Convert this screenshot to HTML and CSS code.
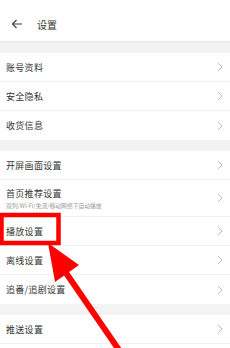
FILE: index.html
```html
<!DOCTYPE html>
<html lang="zh">
<head>
<meta charset="utf-8">
<link rel="stylesheet" href="styles.css">
</head>
<body>
<div class="screen">
  <header class="topbar">
    <svg class="back" width="12" height="10" viewBox="0 0 12 10"><path d="M11 5H1.5M5.5 1L1.5 5l4 4" fill="none" stroke="#444" stroke-width="1.2"/></svg>
    <span class="title">设置</span>
  </header>
  <div class="gap"></div>
  <section class="group">
    <div class="row"><span class="label">账号资料</span><svg class="chev" width="6" height="10" viewBox="0 0 6 10"><path d="M1 1l4 4-4 4" fill="none" stroke="#bbb" stroke-width="1"/></svg></div>
    <div class="row"><span class="label">安全隐私</span><svg class="chev" width="6" height="10" viewBox="0 0 6 10"><path d="M1 1l4 4-4 4" fill="none" stroke="#bbb" stroke-width="1"/></svg></div>
    <div class="row"><span class="label">收货信息</span><svg class="chev" width="6" height="10" viewBox="0 0 6 10"><path d="M1 1l4 4-4 4" fill="none" stroke="#bbb" stroke-width="1"/></svg></div>
  </section>
  <div class="gap"></div>
  <section class="group">
    <div class="row"><span class="label">开屏画面设置</span><svg class="chev" width="6" height="10" viewBox="0 0 6 10"><path d="M1 1l4 4-4 4" fill="none" stroke="#bbb" stroke-width="1"/></svg></div>
    <div class="row tall"><div class="texts"><span class="label">首页推荐设置</span><span class="sub">双列/Wi-Fi/免流/移动网络下自动播放</span></div><svg class="chev" width="6" height="10" viewBox="0 0 6 10"><path d="M1 1l4 4-4 4" fill="none" stroke="#bbb" stroke-width="1"/></svg></div>
    <div class="row"><span class="label">播放设置</span><svg class="chev" width="6" height="10" viewBox="0 0 6 10"><path d="M1 1l4 4-4 4" fill="none" stroke="#bbb" stroke-width="1"/></svg></div>
    <div class="row"><span class="label">离线设置</span><svg class="chev" width="6" height="10" viewBox="0 0 6 10"><path d="M1 1l4 4-4 4" fill="none" stroke="#bbb" stroke-width="1"/></svg></div>
    <div class="row"><span class="label">追番/追剧设置</span><svg class="chev" width="6" height="10" viewBox="0 0 6 10"><path d="M1 1l4 4-4 4" fill="none" stroke="#bbb" stroke-width="1"/></svg></div>
  </section>
  <div class="gap"></div>
  <section class="group">
    <div class="row"><span class="label">推送设置</span><svg class="chev" width="6" height="10" viewBox="0 0 6 10"><path d="M1 1l4 4-4 4" fill="none" stroke="#bbb" stroke-width="1"/></svg></div>
    <div class="row"></div>
  </section>
  <svg class="overlay" width="230" height="348" viewBox="0 0 230 348">
    <rect x="1.5" y="215" width="57" height="28" fill="none" stroke="#f00" stroke-width="4.5"/>
    <line x1="64" y1="270" x2="119" y2="350" stroke="#f00" stroke-width="6"/>
    <polygon points="48,243 55,282 79,265" fill="#f00"/>
  </svg>
</div>
</body>
</html>
```
FILE: styles.css
```css
html, body {
  margin: 0;
  padding: 0;
  background: #fff;
}
.screen {
  position: relative;
  width: 230px;
  height: 348px;
  overflow: hidden;
  background: #f3f3f3;
  font-family: "Noto Sans CJK SC", "Noto Sans", sans-serif;
}
.topbar {
  height: 42px;
  background: #fff;
  border-bottom: 1px solid #e6e6e6;
  display: flex;
  align-items: center;
  padding-top: 7px;
  box-sizing: border-box;
}
.back {
  margin-left: 11px;
  display: block;
}
.title {
  margin-left: 14px;
  font-size: 10px;
  color: #333;
}
.gap {
  height: 11px;
  background: #f3f3f3;
}
.group {
  background: #fff;
}
.row {
  height: 29px;
  display: flex;
  align-items: center;
  justify-content: space-between;
  padding: 0 7px 0 6px;
  border-bottom: 1px solid #f0f0f0;
  box-sizing: border-box;
}
.row:last-child {
  border-bottom: none;
}
.row.tall {
  height: 37px;
}
.texts {
  display: flex;
  flex-direction: column;
}
.label {
  font-size: 9px;
  color: #333;
  letter-spacing: 0.3px;
}
.sub {
  font-size: 5.8px;
  color: #999;
  margin-top: 1px;
}
.chev {
  display: block;
}
.overlay {
  position: absolute;
  left: 0;
  top: 0;
}
```
